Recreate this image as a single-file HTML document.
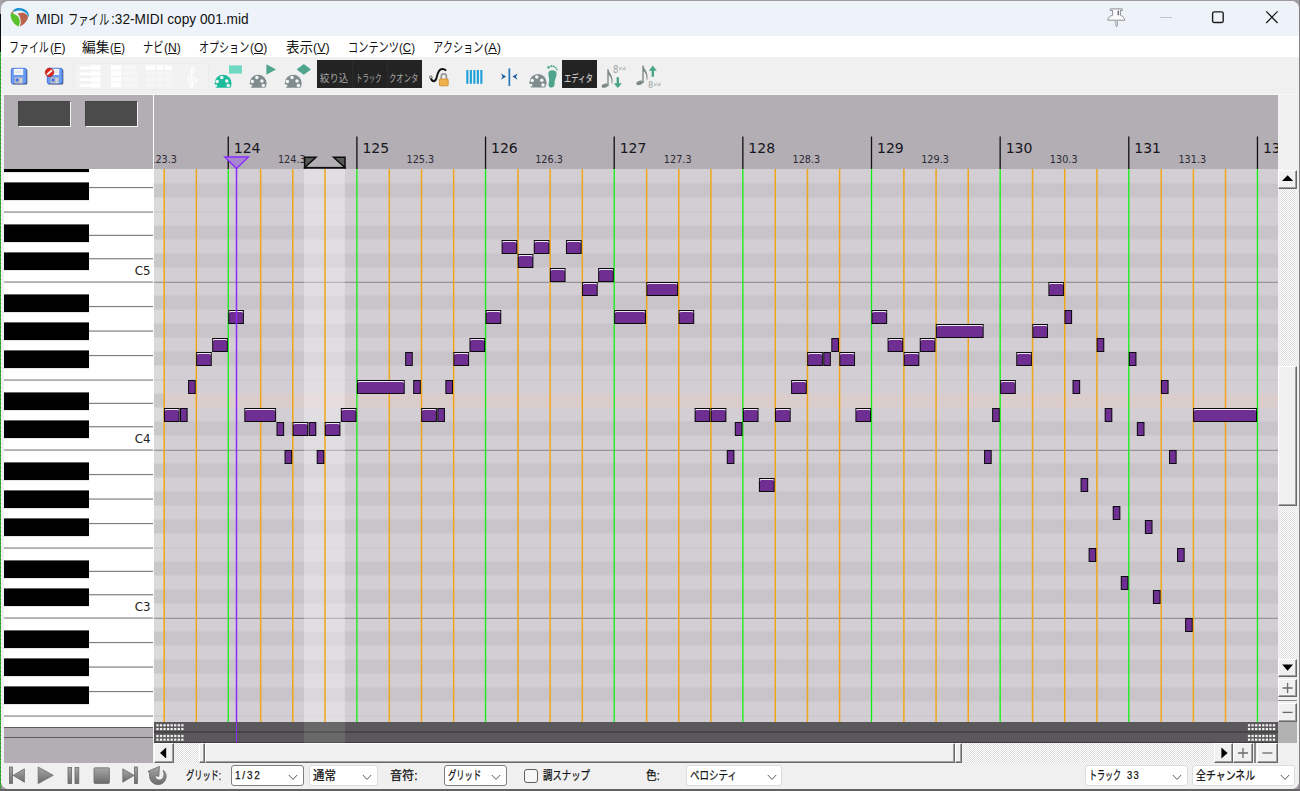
<!DOCTYPE html>
<html lang="ja">
<head>
<meta charset="utf-8">
<title>MIDI ファイル:32-MIDI copy 001.mid</title>
<style>
html,body{margin:0;padding:0}
body{width:1300px;height:791px;position:relative;overflow:hidden;background:#a29ea2;
 font-family:"Liberation Sans","Noto Sans CJK JP",sans-serif;color:#000}
.abs{position:absolute}
#edgeL0{left:0;top:0;width:1px;height:14px;background:#aaa6aa}
#edgeL1{left:0;top:14px;width:1px;height:38px;background:#0c0c0c}
#edgeL2{left:0;top:52px;width:1px;height:739px;background:repeating-linear-gradient(180deg,#2fb52f 0 3px,#4f6b4f 3px 4px)}
#edgeT{left:0;top:0;width:1300px;height:1px;background:#9d999d}
#edgeR{left:1299px;top:0;width:1px;height:791px;background:#868286}
#edgeB{left:0;top:789px;width:1300px;height:2px;background:#636163}
#win{left:1px;top:1px;width:1297.6px;height:788.2px;border-radius:8px;overflow:hidden;background:#f0f0f0}
#pg{left:-1px;top:-1px;width:1300px;height:791px}
#title{left:0;top:0;width:1300px;height:36px;background:#eef3f9}
.tt{left:35.5px;top:9.6px;font-size:14.2px;line-height:18px;white-space:nowrap;color:#111;transform-origin:0 50%}
#menu{left:0;top:36px;width:1300px;height:21px;background:#fff}
.mi{position:absolute;top:38.5px;font-size:13.5px;line-height:18px;white-space:nowrap;color:#111;transform-origin:0 50%}
.mi u{text-decoration:underline;text-underline-offset:1px}
#tb{left:0;top:57px;width:1300px;height:38px;background:#f0f0f0}
#tbline{left:0;top:94px;width:1300px;height:1px;background:#f7f7f7}
.dk{position:absolute;top:60px;height:28px;background:#232323;overflow:hidden}
.dkt{position:absolute;top:72px;font-size:10.5px;line-height:12px;color:#a6a6a6;white-space:nowrap;transform-origin:0 50%}
#hdr{left:4px;top:95px;width:1274px;height:74px;background:#b3aeb3}
.sunk{position:absolute;top:101.4px;height:23.6px;background:#4b4b4b;border-right:1px solid #f4f4f4;border-bottom:1px solid #f4f4f4;border-top:1px solid #444;border-left:1px solid #444;box-sizing:content-box}
#vsepl{left:153px;top:95px;width:1px;height:632px;background:#fbfbfb}
#pianobot{left:4px;top:727px;width:149px;height:36px;background:#b3aeb3}
#ccbars{left:154px;top:722px;width:1124px;height:21px;background:#5a585a}
#ccsep{left:154px;top:731px;width:1124px;height:2px;background:#464446}
#ccbot{left:154px;top:742px;width:1124px;height:1px;background:#3e3c3e}
#ccsel{left:304px;top:722px;width:40.9px;height:21px;background:rgba(255,255,255,.1)}
.dots{position:absolute;width:28px;height:7px;background:
 linear-gradient(90deg,#f2f2f2 0 2.2px,transparent 2.2px 3.5px) 0 0/3.5px 2.2px repeat-x,
 linear-gradient(90deg,#f2f2f2 0 2.2px,transparent 2.2px 3.5px) 0 3.9px/3.5px 2.2px repeat-x}
.chk{background:repeating-conic-gradient(#ffffff 0% 25%,#dedede 0% 50%) 0 0/2px 2px}
.btn3d{position:absolute;background:#f0f0f0;box-sizing:border-box;border-top:1px solid #fff;border-left:1px solid #fff;border-right:1px solid #696969;border-bottom:1px solid #696969;box-shadow:inset -1px -1px 0 #a0a0a0}
#botbar{left:0;top:763px;width:1300px;height:28px;background:#f0f0f0}
.dd{position:absolute;top:765px;height:21px;box-sizing:border-box;background:#fff;border:1px solid #dcdcdc;border-radius:3px;overflow:hidden}
.dd.dkb{border-color:#7f7f7f}
.dd .t{position:absolute;left:5px;top:1.6px;font-size:12px;line-height:16px;white-space:nowrap;color:#111;-webkit-text-stroke:.25px #111;transform-origin:0 50%}
.dd svg{position:absolute;right:4.5px;top:8.4px}
.lbl{position:absolute;top:767.8px;font-size:12px;line-height:16px;white-space:nowrap;color:#111;-webkit-text-stroke:.25px #111;transform-origin:0 50%}
svg{display:block}
svg text{font-family:"DejaVu Sans","Liberation Sans",sans-serif}
#t1{transform:scaleX(0.9214);left:35.7px}
#t2{transform:scaleX(0.7258);left:68.4px}
#t3{transform:scaleX(0.9640);left:110.6px}
#m1k{transform:scaleX(0.7370);left:9.2px}
#m1p{transform:scaleX(0.8928);left:49.6px}
#m2k{transform:scaleX(1.0148);left:82.2px}
#m2p{transform:scaleX(0.8326);left:110.2px}
#m3k{transform:scaleX(0.7593);left:143.1px}
#m3p{transform:scaleX(0.8960);left:164.2px}
#m4k{transform:scaleX(0.7437);left:199.4px}
#m4p{transform:scaleX(0.8865);left:250.2px}
#m5k{transform:scaleX(1.0037);left:285.5px}
#m5p{transform:scaleX(0.9214);left:313.2px}
#m6k{transform:scaleX(0.7556);left:347.5px}
#m6p{transform:scaleX(0.8533);left:399.2px}
#m7k{transform:scaleX(0.7557);left:432.5px}
#m7p{transform:scaleX(0.9436);left:483.6px}
#k1{transform:scaleX(0.8952);left:319.8px}
#k2{transform:scaleX(0.6095);left:356.4px}
#k3{transform:scaleX(0.7000);left:389.2px}
#k4{transform:scaleX(0.6979);left:564.3px}
#l1{transform:scaleX(0.6836);left:186.4px}
#d1{transform:scaleX(0.9075);left:3.0px}
#d2{transform:scaleX(0.9535);left:2.8px}
#l2{transform:scaleX(1.0094);left:389.9px}
#d3{transform:scaleX(0.6914);left:3.0px}
#l3{transform:scaleX(0.7831);left:543.0px}
#l4{transform:scaleX(0.8864);left:645.4px}
#d4{transform:scaleX(0.7945);left:2.7px}
#d5{transform:scaleX(0.6685);left:3.0px}
#d7{transform:scaleX(0.8551);left:41.9px}
#d6{transform:scaleX(0.8263);left:3.5px}
</style>
</head>
<body>
<div class="abs" id="win"><div class="abs" id="pg">

<!-- title bar -->
<div class="abs" id="title"></div>
<svg class="abs" style="left:10px;top:7px" width="20" height="21" viewBox="0 0 20 21">
 <path d="M3.6 2.9 C6 .6 10 .4 13.4 1.8 C17 3.4 19.4 6.4 18.8 9.7 L17.6 9.2 C17.6 7 16 5.4 14.3 4.9 C11.4 3.2 7.6 3.2 4.7 4.4 Z" fill="#1e8fd2"/>
 <path d="M.6 6.7 C.4 10 1.4 13 3.4 15.4 C5 17.4 7 18.8 8.7 19.5 C9.6 17 9.9 15 9.7 13.2 C9.3 10.4 7 8 4.7 7.2 C3.2 6.6 1.8 6.4 .6 6.7 Z" fill="#5bc12b"/>
 <path d="M7.7 6.4 C10 5.6 12.4 5.6 14.3 6.1 C16 6.7 17.4 8.4 18.1 10.2 C17.6 12.4 16.6 13.8 16.3 14.2 C14.6 16.6 12.4 18.4 9.7 19.5 C10.8 17 10.9 15.4 10.7 14.2 C10.6 11.4 9.8 8.6 7.7 6.4 Z" fill="#b9634f"/>
 <path d="M2.2 4.4 L3.6 6.6 L.8 6.5 Z" fill="#8a6a18"/>
 <path d="M2.2 4.4 L3.6 2.9 L4.4 4.4 Z" fill="#4a6a5a"/>
</svg>
<div class="abs tt" id="t1">MIDI</div><div class="abs tt" id="t2">ファイル</div><div class="abs tt" id="t3">:32-MIDI copy 001.mid</div>
<!-- caption buttons -->
<svg class="abs" style="left:1106px;top:8px" width="20" height="20" viewBox="0 0 20 20">
 <path d="M4.2 .9 H16.3 V2.5 H14.4 V7.3 C16.8 8 18.4 9.6 18.7 12.2 H1.8 C2.1 9.6 3.7 8 6.6 7.3 V2.5 H4.2 Z" fill="#fbfbfb" stroke="#8e9094" stroke-width="1"/>
 <path d="M9.8 12.4 V17 L10.6 18.8 L11.4 17 V12.4" fill="#fbfbfb" stroke="#8e9094" stroke-width=".9"/>
 <path d="M12.2 2.8 V7.2" stroke="#444" stroke-width="1.1"/>
</svg>
<div class="abs" style="left:1160px;top:17px;width:12px;height:1px;background:#c3c7cb"></div>
<svg class="abs" style="left:1211px;top:10px" width="14" height="14" viewBox="0 0 14 14"><rect x="1.6" y="1.9" width="10.6" height="10.6" rx="1.6" fill="none" stroke="#1c1c1c" stroke-width="1.4"/></svg>
<svg class="abs" style="left:1265px;top:10px" width="14" height="14" viewBox="0 0 14 14"><path d="M1.2 1.4 L12.6 13 M12.6 1.4 L1.2 13" stroke="#1c1c1c" stroke-width="1.3" fill="none"/></svg>

<!-- menu -->
<div class="abs" id="menu"></div>
<div class="mi" id="m1k">ファイル</div><div class="mi" id="m1p">(<u>F</u>)</div>
<div class="mi" id="m2k">編集</div><div class="mi" id="m2p">(<u>E</u>)</div>
<div class="mi" id="m3k">ナビ</div><div class="mi" id="m3p">(<u>N</u>)</div>
<div class="mi" id="m4k">オプション</div><div class="mi" id="m4p">(<u>O</u>)</div>
<div class="mi" id="m5k">表示</div><div class="mi" id="m5p">(<u>V</u>)</div>
<div class="mi" id="m6k">コンテンツ</div><div class="mi" id="m6p">(<u>C</u>)</div>
<div class="mi" id="m7k">アクション</div><div class="mi" id="m7p">(<u>A</u>)</div>

<!-- toolbar -->
<div class="abs" id="tb"></div>
<div class="abs" id="tbline"></div>
<svg class="abs" style="left:0;top:57px" width="700" height="38" viewBox="0 57 700 38">
 <!-- save -->
 <g>
  <rect x="11.9" y="69" width="15.4" height="15.6" rx="1.6" fill="#1a1a22" opacity=".75"/>
  <rect x="11.3" y="68.3" width="15" height="15.4" rx="1.6" fill="#6a9bf6" stroke="#3f6fe0" stroke-width=".9"/>
  <rect x="13.8" y="68.8" width="9.4" height="6.2" fill="#f2f4f8"/>
  <rect x="14.9" y="71.2" width="7.2" height="1.6" fill="#dfe1e6"/>
  <rect x="14.5" y="77.3" width="8.4" height="6.2" fill="#b4b8c0"/>
  <circle cx="17.200000000000003" cy="79.9" r="1.5" fill="#3a6cf0"/>
  <rect x="19.6" y="78.3" width="2.4" height="4.6" fill="#d0d3d8"/>
 </g>
 <g>
  <rect x="47.9" y="69" width="15.4" height="15.6" rx="1.6" fill="#1a1a22" opacity=".75"/>
  <rect x="47.3" y="68.3" width="15" height="15.4" rx="1.6" fill="#6a9bf6" stroke="#3f6fe0" stroke-width=".9"/>
  <rect x="49.8" y="68.8" width="9.4" height="6.2" fill="#f2f4f8"/>
  <rect x="50.9" y="71.2" width="7.2" height="1.6" fill="#dfe1e6"/>
  <rect x="50.5" y="77.3" width="8.4" height="6.2" fill="#b4b8c0"/>
  <circle cx="53.199999999999996" cy="79.9" r="1.5" fill="#3a6cf0"/>
  <rect x="55.599999999999994" y="78.3" width="2.4" height="4.6" fill="#d0d3d8"/>
  <circle cx="49.5" cy="72.4" r="4.2" fill="#e0281e" stroke="#b01810" stroke-width=".7"/>
  <path d="M47 74.6 L52 70.2" stroke="#fff" stroke-width="1.9"/>
 </g>
 <!-- disabled view group -->
 <rect x="73.5" y="63.5" width="135" height="26" rx="4" fill="#f2f2f2" stroke="#ececec" stroke-width="1"/>
 <g fill="#fff">
  <rect x="79.5" y="66.6" width="12" height="2.6"/><rect x="91" y="65.4" width="9.4" height="4.6"/><rect x="79.5" y="72.5" width="12" height="2.6"/><rect x="91" y="71.3" width="9.4" height="4.6"/><rect x="79.5" y="78.4" width="12" height="2.6"/><rect x="91" y="77.2" width="9.4" height="4.6"/><rect x="79.5" y="84.3" width="12" height="2.6"/><rect x="91" y="83.1" width="9.4" height="4.6"/>
  <rect x="111" y="65.3" width="10.5" height="4.6"/><rect x="111" y="71.1" width="10.5" height="4.6"/><rect x="111" y="76.9" width="10.5" height="4.6"/><rect x="111" y="82.7" width="10.5" height="4.6"/>
  <rect x="146" y="65.5" width="9" height="4.4"/><rect x="156.5" y="65.5" width="7" height="4.4"/><rect x="165" y="65.5" width="7" height="4.4"/>
 </g>
 <g fill="#f6f6f6">
  <rect x="123" y="65.3" width="14" height="4.6"/><rect x="123" y="71.1" width="14" height="4.6"/><rect x="123" y="76.9" width="14" height="4.6"/><rect x="123" y="82.7" width="14" height="4.6"/>
  <rect x="146" y="71.3" width="9" height="4.4"/><rect x="156.5" y="71.3" width="7" height="4.4"/><rect x="165" y="71.3" width="7" height="4.4"/>
  <rect x="146" y="77.1" width="9" height="4.4"/><rect x="156.5" y="77.1" width="7" height="4.4"/><rect x="165" y="77.1" width="7" height="4.4"/>
  <rect x="146" y="82.9" width="9" height="4.4"/><rect x="156.5" y="82.9" width="7" height="4.4"/><rect x="165" y="82.9" width="7" height="4.4"/>
 </g>
 <!-- treble clef (disabled) -->
 <path d="M192.6 87 C189.5 88 189.4 84.6 191.6 84.4 M192.6 87 L191.4 70 C191.2 66.6 194.4 65.4 194.2 69.4 C194 73 187.4 75.6 188 80.4 C188.6 84.6 196.4 84.4 196 80 C195.6 76.6 190.6 77.2 191.2 80.6" fill="none" stroke="#fff" stroke-width="1.1"/>
 <!-- midi icons -->
 <clipPath id="cpA"><rect x="200" y="60" width="120" height="27.8"/></clipPath>
 <g clip-path="url(#cpA)">
  <circle cx="223.1" cy="83.2" r="8.4" fill="#1abc9c"/>
  <circle cx="258.2" cy="83.2" r="8.4" fill="#7f8c8d"/>
  <circle cx="293.3" cy="83.2" r="8.4" fill="#7f8c8d"/>
 </g>
 <g fill="#f4f4f4">
  <circle cx="221.8" cy="77.6" r="1.75"/><circle cx="217.2" cy="81.4" r="1.75"/><circle cx="226.8" cy="81" r="1.75"/><circle cx="228.2" cy="85.6" r="1.75"/><rect x="214.4" y="84.6" width="2.6" height="2.2"/>
  <circle cx="256.9" cy="77.6" r="1.75"/><circle cx="252.3" cy="81.4" r="1.75"/><circle cx="261.9" cy="81" r="1.75"/><circle cx="263.3" cy="85.6" r="1.75"/><rect x="249.5" y="84.6" width="2.6" height="2.2"/>
  <circle cx="292" cy="77.6" r="1.75"/><circle cx="287.4" cy="81.4" r="1.75"/><circle cx="297" cy="81" r="1.75"/><circle cx="298.4" cy="85.6" r="1.75"/><rect x="284.6" y="84.6" width="2.6" height="2.2"/>
 </g>
 <rect x="229" y="65.4" width="13" height="8.2" fill="#6fd9c4"/>
 <path d="M266.4 64.3 L276 69.5 L266.4 74.7 Z" fill="#4fa58b"/>
 <path d="M296.6 69.4 L303.8 64 L311 69.4 L303.8 74.8 Z" fill="#4fa58b"/>
 <!-- lock icon -->
 <path d="M430.6 77.2 C432 82.8 435.6 82.4 436.8 77 C438.2 70.4 441.2 66.6 446.2 70.6" fill="none" stroke="#111" stroke-width="1.9"/>
 <circle cx="430.8" cy="77.2" r="1.3" fill="#fff" stroke="#111" stroke-width=".6"/>
 <path d="M441.2 79.4 V76.4 C441.2 73 446.4 73 446.4 76.4 V79.4" fill="none" stroke="#9a9a9a" stroke-width="1.7"/>
 <rect x="439.4" y="79" width="8.8" height="6.8" rx=".8" fill="#f0b04a" stroke="#c98a2a" stroke-width=".8"/>
 <!-- blue bars -->
 <g fill="#1b9fd8">
  <rect x="466.3" y="70" width="2.1" height="13.8"/><rect x="469.8" y="70" width="2.1" height="13.8"/><rect x="473.3" y="70" width="2.1" height="13.8"/><rect x="476.8" y="70" width="2.1" height="13.8"/><rect x="480.3" y="70" width="2.1" height="13.8"/>
 </g>
 <!-- >|< -->
 <rect x="508.5" y="68.4" width="1.7" height="17.6" fill="#1f78b8"/>
 <path d="M501 73.6 L506.2 76.6 L501 79.8 L502.6 76.7 Z" fill="#1f5fa0"/>
 <path d="M517.6 73.6 L512.4 76.6 L517.6 79.8 L516 76.7 Z" fill="#1f5fa0"/>
 <!-- midi + foot -->
 <clipPath id="cpB"><rect x="520" y="60" width="40" height="27.6"/></clipPath>
 <g clip-path="url(#cpB)"><circle cx="538" cy="82.6" r="8.6" fill="#7f8c8d"/></g>
 <g fill="#f4f4f4"><circle cx="536.8" cy="77" r="1.75"/><circle cx="532.2" cy="80.6" r="1.75"/><circle cx="541.8" cy="80.2" r="1.75"/><circle cx="543" cy="85" r="1.75"/><rect x="529.6" y="84" width="2.6" height="2.2"/></g>
 <path d="M549 71.5 C551 69.4 556.6 70 556.6 73.6 C556.6 77.6 554.4 79.4 554.6 83 C554.8 86.6 553 87.8 551 87.6 C548.4 87.4 548.2 84.6 549 81.4 C549.8 78 547.2 74.4 549 71.5 Z" fill="#4fa58b"/>
 <g fill="#4fa58b"><circle cx="548.6" cy="67.4" r="1.3"/><circle cx="551.4" cy="66.2" r="1.1"/><circle cx="553.8" cy="66.6" r="1"/><circle cx="555.8" cy="67.8" r=".9"/><circle cx="557" cy="69.6" r=".8"/></g>
 <!-- note icons -->
 <clipPath id="cpN"><rect x="598" y="60" width="70" height="27.8"/></clipPath>
 <g clip-path="url(#cpN)">
 <g fill="#7e8a87">
  <ellipse cx="604.9" cy="85.8" rx="3.4" ry="2.1" transform="rotate(-20 604.9 85.8)"/>
  <path d="M607.3 86 V69.2 H608.5 C608.9 73 613.6 75 612.4 83.6 L611.5 83.4 C612 78 609.8 76 608.7 75 V86 Z"/>
  <ellipse cx="639.6" cy="82.9" rx="3.4" ry="2.1" transform="rotate(-20 639.6 82.9)"/>
  <path d="M642.3 83 V65.4 H643.5 C643.9 69.2 648.6 71.2 647.4 79.8 L646.5 79.6 C647 74.2 644.8 72.2 643.7 71.2 V83 Z"/>
 </g>
 <path d="M616.6 77.2 H619 V83.2 H621.8 L617.8 88.2 L613.8 83.2 H616.6 Z" fill="#4aa68a"/>
 <path d="M651.6 76.8 H654 V70.8 H656.8 L652.8 65.6 L648.8 70.8 H651.6 Z" fill="#4aa68a"/>
 <text x="613" y="73.2" font-size="10" fill="#9aa4a1" textLength="5.4" lengthAdjust="spacingAndGlyphs">8</text>
 <text x="618.4" y="70.4" font-size="6" fill="#9aa4a1" font-style="italic" textLength="7.4" lengthAdjust="spacingAndGlyphs">va</text>
 <text x="648" y="87.6" font-size="9" fill="#9aa4a1" textLength="5.2" lengthAdjust="spacingAndGlyphs">8</text>
 <text x="653.4" y="85.6" font-size="6" fill="#9aa4a1" font-style="italic" textLength="7.4" lengthAdjust="spacingAndGlyphs">va</text>
 </g>
</svg>
<div class="dk" style="left:316.5px;width:35px"></div><div class="dkt" id="k1">絞り込</div>
<div class="dk" style="left:351.5px;width:35px;border-left:1px solid #2b2b2b;box-sizing:border-box"></div><div class="dkt" id="k2">トラック</div>
<div class="dk" style="left:386.5px;width:35px;border-left:1px solid #2b2b2b;box-sizing:border-box"></div><div class="dkt" id="k3">クオンタ</div>
<div class="dk" style="left:562px;width:35px"></div><div class="dkt" id="k4" style="color:#e4e4e4">エディタ</div>

<!-- header / ruler -->
<div class="abs" id="hdr"></div>
<div class="sunk" style="left:18.3px;width:51px"></div>
<div class="sunk" style="left:84.6px;width:51px"></div>

<!-- main editor svg -->
<svg class="abs" style="left:0;top:95px" width="1300" height="648" viewBox="0 95 1300 648">
<rect x="4" y="169" width="149" height="558" fill="#ffffff"/>
<rect x="4" y="281.45" width="149" height="1.2" fill="#858585"/>
<rect x="4" y="211.45" width="149" height="1.2" fill="#858585"/>
<rect x="88" y="258.12" width="65" height="1.2" fill="#808080"/>
<rect x="88" y="234.78" width="65" height="1.2" fill="#808080"/>
<rect x="88" y="186.95" width="65" height="1.2" fill="#808080"/>
<rect x="4" y="449.45" width="149" height="1.2" fill="#858585"/>
<rect x="4" y="379.45" width="149" height="1.2" fill="#858585"/>
<rect x="88" y="426.12" width="65" height="1.2" fill="#808080"/>
<rect x="88" y="402.78" width="65" height="1.2" fill="#808080"/>
<rect x="88" y="354.95" width="65" height="1.2" fill="#808080"/>
<rect x="88" y="330.45" width="65" height="1.2" fill="#808080"/>
<rect x="88" y="305.95" width="65" height="1.2" fill="#808080"/>
<rect x="4" y="617.45" width="149" height="1.2" fill="#858585"/>
<rect x="4" y="547.45" width="149" height="1.2" fill="#858585"/>
<rect x="88" y="594.12" width="65" height="1.2" fill="#808080"/>
<rect x="88" y="570.78" width="65" height="1.2" fill="#808080"/>
<rect x="88" y="522.95" width="65" height="1.2" fill="#808080"/>
<rect x="88" y="498.45" width="65" height="1.2" fill="#808080"/>
<rect x="88" y="473.95" width="65" height="1.2" fill="#808080"/>
<rect x="4" y="715.45" width="149" height="1.2" fill="#858585"/>
<rect x="88" y="690.95" width="65" height="1.2" fill="#808080"/>
<rect x="88" y="666.45" width="65" height="1.2" fill="#808080"/>
<rect x="88" y="641.95" width="65" height="1.2" fill="#808080"/>
<rect x="4" y="169.00" width="85" height="3.10" fill="#000"/>
<rect x="4" y="182.40" width="85" height="17.70" fill="#000"/>
<rect x="4" y="224.40" width="85" height="17.70" fill="#000"/>
<rect x="4" y="252.40" width="85" height="17.70" fill="#000"/>
<rect x="4" y="294.40" width="85" height="17.70" fill="#000"/>
<rect x="4" y="322.40" width="85" height="17.70" fill="#000"/>
<rect x="4" y="350.40" width="85" height="17.70" fill="#000"/>
<rect x="4" y="392.40" width="85" height="17.70" fill="#000"/>
<rect x="4" y="420.40" width="85" height="17.70" fill="#000"/>
<rect x="4" y="462.40" width="85" height="17.70" fill="#000"/>
<rect x="4" y="490.40" width="85" height="17.70" fill="#000"/>
<rect x="4" y="518.40" width="85" height="17.70" fill="#000"/>
<rect x="4" y="560.40" width="85" height="17.70" fill="#000"/>
<rect x="4" y="588.40" width="85" height="17.70" fill="#000"/>
<rect x="4" y="630.40" width="85" height="17.70" fill="#000"/>
<rect x="4" y="658.40" width="85" height="17.70" fill="#000"/>
<rect x="4" y="686.40" width="85" height="17.70" fill="#000"/>
<text x="150.6" y="275.10" font-size="11.8" text-anchor="end" fill="#222" font-family="Liberation Sans, sans-serif">C5</text>
<text x="150.6" y="443.10" font-size="11.8" text-anchor="end" fill="#222" font-family="Liberation Sans, sans-serif">C4</text>
<text x="150.6" y="611.10" font-size="11.8" text-anchor="end" fill="#222" font-family="Liberation Sans, sans-serif">C3</text>
<clipPath id="cpG"><rect x="154" y="95" width="1124" height="648"/></clipPath>
<g clip-path="url(#cpG)">
<rect x="154" y="169" width="9.93" height="553" fill="#dadada"/>
<rect x="163.93" y="169" width="1114.08" height="553" fill="#d2ced3"/>
<rect x="154" y="183.50" width="9.93" height="14.00" fill="#c9c9c9"/>
<rect x="163.93" y="183.50" width="1114.08" height="14.00" fill="#c8c4c9"/>
<rect x="154" y="211.40" width="1124" height="1" fill="#c9c5ca"/>
<rect x="154" y="225.50" width="9.93" height="14.00" fill="#c9c9c9"/>
<rect x="163.93" y="225.50" width="1114.08" height="14.00" fill="#c8c4c9"/>
<rect x="154" y="253.50" width="9.93" height="14.00" fill="#c9c9c9"/>
<rect x="163.93" y="253.50" width="1114.08" height="14.00" fill="#c8c4c9"/>
<rect x="154" y="295.50" width="9.93" height="14.00" fill="#c9c9c9"/>
<rect x="163.93" y="295.50" width="1114.08" height="14.00" fill="#c8c4c9"/>
<rect x="154" y="323.50" width="9.93" height="14.00" fill="#c9c9c9"/>
<rect x="163.93" y="323.50" width="1114.08" height="14.00" fill="#c8c4c9"/>
<rect x="154" y="351.50" width="9.93" height="14.00" fill="#c9c9c9"/>
<rect x="163.93" y="351.50" width="1114.08" height="14.00" fill="#c8c4c9"/>
<rect x="154" y="379.40" width="1124" height="1" fill="#c9c5ca"/>
<rect x="154" y="393.50" width="9.93" height="14.00" fill="#c9c9c9"/>
<rect x="163.93" y="393.50" width="1114.08" height="14.00" fill="#dccdcd"/>
<rect x="154" y="421.50" width="9.93" height="14.00" fill="#c9c9c9"/>
<rect x="163.93" y="421.50" width="1114.08" height="14.00" fill="#c8c4c9"/>
<rect x="154" y="463.50" width="9.93" height="14.00" fill="#c9c9c9"/>
<rect x="163.93" y="463.50" width="1114.08" height="14.00" fill="#c8c4c9"/>
<rect x="154" y="491.50" width="9.93" height="14.00" fill="#c9c9c9"/>
<rect x="163.93" y="491.50" width="1114.08" height="14.00" fill="#c8c4c9"/>
<rect x="154" y="519.50" width="9.93" height="14.00" fill="#c9c9c9"/>
<rect x="163.93" y="519.50" width="1114.08" height="14.00" fill="#c8c4c9"/>
<rect x="154" y="547.40" width="1124" height="1" fill="#c9c5ca"/>
<rect x="154" y="561.50" width="9.93" height="14.00" fill="#c9c9c9"/>
<rect x="163.93" y="561.50" width="1114.08" height="14.00" fill="#c8c4c9"/>
<rect x="154" y="589.50" width="9.93" height="14.00" fill="#c9c9c9"/>
<rect x="163.93" y="589.50" width="1114.08" height="14.00" fill="#c8c4c9"/>
<rect x="154" y="631.50" width="9.93" height="14.00" fill="#c9c9c9"/>
<rect x="163.93" y="631.50" width="1114.08" height="14.00" fill="#c8c4c9"/>
<rect x="154" y="659.50" width="9.93" height="14.00" fill="#c9c9c9"/>
<rect x="163.93" y="659.50" width="1114.08" height="14.00" fill="#c8c4c9"/>
<rect x="154" y="687.50" width="9.93" height="14.00" fill="#c9c9c9"/>
<rect x="163.93" y="687.50" width="1114.08" height="14.00" fill="#c8c4c9"/>
<rect x="154" y="715.40" width="1124" height="1" fill="#c9c5ca"/>
<rect x="154" y="281.75" width="1124" height="1.1" fill="#8f8b8f"/>
<rect x="154" y="449.75" width="1124" height="1.1" fill="#8f8b8f"/>
<rect x="154" y="617.75" width="1124" height="1.1" fill="#8f8b8f"/>
<rect x="304.0" y="169" width="40.90" height="553" fill="#ffffff" fill-opacity="0.33"/>
<rect x="163.43" y="169" width="1.5" height="553" fill="#f0a61a"/>
<rect x="195.59" y="169" width="1.5" height="553" fill="#f0a61a"/>
<rect x="227.60" y="169" width="1.3" height="553" fill="#12f012"/>
<rect x="259.91" y="169" width="1.5" height="553" fill="#f0a61a"/>
<rect x="292.07" y="169" width="1.5" height="553" fill="#f0a61a"/>
<rect x="324.24" y="169" width="1.5" height="553" fill="#f0a61a"/>
<rect x="356.25" y="169" width="1.3" height="553" fill="#12f012"/>
<rect x="388.56" y="169" width="1.5" height="553" fill="#f0a61a"/>
<rect x="420.73" y="169" width="1.5" height="553" fill="#f0a61a"/>
<rect x="452.89" y="169" width="1.5" height="553" fill="#f0a61a"/>
<rect x="484.90" y="169" width="1.3" height="553" fill="#12f012"/>
<rect x="517.21" y="169" width="1.5" height="553" fill="#f0a61a"/>
<rect x="549.38" y="169" width="1.5" height="553" fill="#f0a61a"/>
<rect x="581.54" y="169" width="1.5" height="553" fill="#f0a61a"/>
<rect x="613.55" y="169" width="1.3" height="553" fill="#12f012"/>
<rect x="645.86" y="169" width="1.5" height="553" fill="#f0a61a"/>
<rect x="678.03" y="169" width="1.5" height="553" fill="#f0a61a"/>
<rect x="710.19" y="169" width="1.5" height="553" fill="#f0a61a"/>
<rect x="742.20" y="169" width="1.3" height="553" fill="#12f012"/>
<rect x="774.51" y="169" width="1.5" height="553" fill="#f0a61a"/>
<rect x="806.68" y="169" width="1.5" height="553" fill="#f0a61a"/>
<rect x="838.84" y="169" width="1.5" height="553" fill="#f0a61a"/>
<rect x="870.85" y="169" width="1.3" height="553" fill="#12f012"/>
<rect x="903.16" y="169" width="1.5" height="553" fill="#f0a61a"/>
<rect x="935.33" y="169" width="1.5" height="553" fill="#f0a61a"/>
<rect x="967.49" y="169" width="1.5" height="553" fill="#f0a61a"/>
<rect x="999.50" y="169" width="1.3" height="553" fill="#12f012"/>
<rect x="1031.81" y="169" width="1.5" height="553" fill="#f0a61a"/>
<rect x="1063.97" y="169" width="1.5" height="553" fill="#f0a61a"/>
<rect x="1096.14" y="169" width="1.5" height="553" fill="#f0a61a"/>
<rect x="1128.15" y="169" width="1.3" height="553" fill="#12f012"/>
<rect x="1160.46" y="169" width="1.5" height="553" fill="#f0a61a"/>
<rect x="1192.62" y="169" width="1.5" height="553" fill="#f0a61a"/>
<rect x="1224.79" y="169" width="1.5" height="553" fill="#f0a61a"/>
<rect x="1256.80" y="169" width="1.3" height="553" fill="#12f012"/>
<rect x="163.93" y="408.00" width="15.68" height="14" fill="#0a0a0a"/>
<rect x="164.93" y="409.00" width="13.68" height="12" fill="#6f2e92"/>
<path d="M165.23 410.60 L165.23 409.50 L178.31 409.50 L178.31 410.60" fill="none" stroke="#eee6f2" stroke-width="1"/>
<rect x="180.01" y="408.00" width="7.64" height="14" fill="#0a0a0a"/>
<rect x="181.01" y="409.00" width="5.64" height="12" fill="#6f2e92"/>
<rect x="188.05" y="380.00" width="7.64" height="14" fill="#0a0a0a"/>
<rect x="189.05" y="381.00" width="5.64" height="12" fill="#6f2e92"/>
<rect x="196.09" y="352.00" width="15.68" height="14" fill="#0a0a0a"/>
<rect x="197.09" y="353.00" width="13.68" height="12" fill="#6f2e92"/>
<path d="M197.39 354.60 L197.39 353.50 L210.47 353.50 L210.47 354.60" fill="none" stroke="#eee6f2" stroke-width="1"/>
<rect x="212.17" y="338.00" width="15.68" height="14" fill="#0a0a0a"/>
<rect x="213.17" y="339.00" width="13.68" height="12" fill="#6f2e92"/>
<path d="M213.47 340.60 L213.47 339.50 L226.55 339.50 L226.55 340.60" fill="none" stroke="#eee6f2" stroke-width="1"/>
<rect x="228.25" y="310.00" width="15.68" height="14" fill="#0a0a0a"/>
<rect x="229.25" y="311.00" width="13.68" height="12" fill="#6f2e92"/>
<path d="M229.55 312.60 L229.55 311.50 L242.63 311.50 L242.63 312.60" fill="none" stroke="#eee6f2" stroke-width="1"/>
<rect x="244.33" y="408.00" width="31.76" height="14" fill="#0a0a0a"/>
<rect x="245.33" y="409.00" width="29.76" height="12" fill="#6f2e92"/>
<path d="M245.63 410.60 L245.63 409.50 L274.79 409.50 L274.79 410.60" fill="none" stroke="#eee6f2" stroke-width="1"/>
<rect x="276.49" y="422.00" width="7.64" height="14" fill="#0a0a0a"/>
<rect x="277.49" y="423.00" width="5.64" height="12" fill="#6f2e92"/>
<rect x="284.53" y="450.00" width="7.64" height="14" fill="#0a0a0a"/>
<rect x="285.53" y="451.00" width="5.64" height="12" fill="#6f2e92"/>
<rect x="292.57" y="422.00" width="15.68" height="14" fill="#0a0a0a"/>
<rect x="293.57" y="423.00" width="13.68" height="12" fill="#6f2e92"/>
<path d="M293.88 424.60 L293.88 423.50 L306.96 423.50 L306.96 424.60" fill="none" stroke="#eee6f2" stroke-width="1"/>
<rect x="308.66" y="422.00" width="7.64" height="14" fill="#0a0a0a"/>
<rect x="309.66" y="423.00" width="5.64" height="12" fill="#6f2e92"/>
<rect x="316.70" y="450.00" width="7.64" height="14" fill="#0a0a0a"/>
<rect x="317.70" y="451.00" width="5.64" height="12" fill="#6f2e92"/>
<rect x="324.74" y="422.00" width="15.68" height="14" fill="#0a0a0a"/>
<rect x="325.74" y="423.00" width="13.68" height="12" fill="#6f2e92"/>
<path d="M326.04 424.60 L326.04 423.50 L339.12 423.50 L339.12 424.60" fill="none" stroke="#eee6f2" stroke-width="1"/>
<rect x="340.82" y="408.00" width="15.68" height="14" fill="#0a0a0a"/>
<rect x="341.82" y="409.00" width="13.68" height="12" fill="#6f2e92"/>
<path d="M342.12 410.60 L342.12 409.50 L355.20 409.50 L355.20 410.60" fill="none" stroke="#eee6f2" stroke-width="1"/>
<rect x="356.90" y="380.00" width="47.84" height="14" fill="#0a0a0a"/>
<rect x="357.90" y="381.00" width="45.84" height="12" fill="#6f2e92"/>
<path d="M358.20 382.60 L358.20 381.50 L403.44 381.50 L403.44 382.60" fill="none" stroke="#eee6f2" stroke-width="1"/>
<rect x="405.14" y="352.00" width="7.64" height="14" fill="#0a0a0a"/>
<rect x="406.14" y="353.00" width="5.64" height="12" fill="#6f2e92"/>
<rect x="413.18" y="380.00" width="7.64" height="14" fill="#0a0a0a"/>
<rect x="414.18" y="381.00" width="5.64" height="12" fill="#6f2e92"/>
<rect x="421.23" y="408.00" width="15.68" height="14" fill="#0a0a0a"/>
<rect x="422.23" y="409.00" width="13.68" height="12" fill="#6f2e92"/>
<path d="M422.53 410.60 L422.53 409.50 L435.61 409.50 L435.61 410.60" fill="none" stroke="#eee6f2" stroke-width="1"/>
<rect x="437.31" y="408.00" width="7.64" height="14" fill="#0a0a0a"/>
<rect x="438.31" y="409.00" width="5.64" height="12" fill="#6f2e92"/>
<rect x="445.35" y="380.00" width="7.64" height="14" fill="#0a0a0a"/>
<rect x="446.35" y="381.00" width="5.64" height="12" fill="#6f2e92"/>
<rect x="453.39" y="352.00" width="15.68" height="14" fill="#0a0a0a"/>
<rect x="454.39" y="353.00" width="13.68" height="12" fill="#6f2e92"/>
<path d="M454.69 354.60 L454.69 353.50 L467.77 353.50 L467.77 354.60" fill="none" stroke="#eee6f2" stroke-width="1"/>
<rect x="469.47" y="338.00" width="15.68" height="14" fill="#0a0a0a"/>
<rect x="470.47" y="339.00" width="13.68" height="12" fill="#6f2e92"/>
<path d="M470.77 340.60 L470.77 339.50 L483.85 339.50 L483.85 340.60" fill="none" stroke="#eee6f2" stroke-width="1"/>
<rect x="485.55" y="310.00" width="15.68" height="14" fill="#0a0a0a"/>
<rect x="486.55" y="311.00" width="13.68" height="12" fill="#6f2e92"/>
<path d="M486.85 312.60 L486.85 311.50 L499.93 311.50 L499.93 312.60" fill="none" stroke="#eee6f2" stroke-width="1"/>
<rect x="501.63" y="240.00" width="15.68" height="14" fill="#0a0a0a"/>
<rect x="502.63" y="241.00" width="13.68" height="12" fill="#6f2e92"/>
<path d="M502.93 242.60 L502.93 241.50 L516.01 241.50 L516.01 242.60" fill="none" stroke="#eee6f2" stroke-width="1"/>
<rect x="517.71" y="254.00" width="15.68" height="14" fill="#0a0a0a"/>
<rect x="518.71" y="255.00" width="13.68" height="12" fill="#6f2e92"/>
<path d="M519.01 256.60 L519.01 255.50 L532.09 255.50 L532.09 256.60" fill="none" stroke="#eee6f2" stroke-width="1"/>
<rect x="533.79" y="240.00" width="15.68" height="14" fill="#0a0a0a"/>
<rect x="534.79" y="241.00" width="13.68" height="12" fill="#6f2e92"/>
<path d="M535.09 242.60 L535.09 241.50 L548.18 241.50 L548.18 242.60" fill="none" stroke="#eee6f2" stroke-width="1"/>
<rect x="549.88" y="268.00" width="15.68" height="14" fill="#0a0a0a"/>
<rect x="550.88" y="269.00" width="13.68" height="12" fill="#6f2e92"/>
<path d="M551.17 270.60 L551.17 269.50 L564.26 269.50 L564.26 270.60" fill="none" stroke="#eee6f2" stroke-width="1"/>
<rect x="565.96" y="240.00" width="15.68" height="14" fill="#0a0a0a"/>
<rect x="566.96" y="241.00" width="13.68" height="12" fill="#6f2e92"/>
<path d="M567.26 242.60 L567.26 241.50 L580.34 241.50 L580.34 242.60" fill="none" stroke="#eee6f2" stroke-width="1"/>
<rect x="582.04" y="282.00" width="15.68" height="14" fill="#0a0a0a"/>
<rect x="583.04" y="283.00" width="13.68" height="12" fill="#6f2e92"/>
<path d="M583.34 284.60 L583.34 283.50 L596.42 283.50 L596.42 284.60" fill="none" stroke="#eee6f2" stroke-width="1"/>
<rect x="598.12" y="268.00" width="15.68" height="14" fill="#0a0a0a"/>
<rect x="599.12" y="269.00" width="13.68" height="12" fill="#6f2e92"/>
<path d="M599.42 270.60 L599.42 269.50 L612.50 269.50 L612.50 270.60" fill="none" stroke="#eee6f2" stroke-width="1"/>
<rect x="614.20" y="310.00" width="31.76" height="14" fill="#0a0a0a"/>
<rect x="615.20" y="311.00" width="29.76" height="12" fill="#6f2e92"/>
<path d="M615.50 312.60 L615.50 311.50 L644.66 311.50 L644.66 312.60" fill="none" stroke="#eee6f2" stroke-width="1"/>
<rect x="646.36" y="282.00" width="31.76" height="14" fill="#0a0a0a"/>
<rect x="647.36" y="283.00" width="29.76" height="12" fill="#6f2e92"/>
<path d="M647.66 284.60 L647.66 283.50 L676.83 283.50 L676.83 284.60" fill="none" stroke="#eee6f2" stroke-width="1"/>
<rect x="678.53" y="310.00" width="15.68" height="14" fill="#0a0a0a"/>
<rect x="679.53" y="311.00" width="13.68" height="12" fill="#6f2e92"/>
<path d="M679.83 312.60 L679.83 311.50 L692.91 311.50 L692.91 312.60" fill="none" stroke="#eee6f2" stroke-width="1"/>
<rect x="694.61" y="408.00" width="15.68" height="14" fill="#0a0a0a"/>
<rect x="695.61" y="409.00" width="13.68" height="12" fill="#6f2e92"/>
<path d="M695.91 410.60 L695.91 409.50 L708.99 409.50 L708.99 410.60" fill="none" stroke="#eee6f2" stroke-width="1"/>
<rect x="710.69" y="408.00" width="15.68" height="14" fill="#0a0a0a"/>
<rect x="711.69" y="409.00" width="13.68" height="12" fill="#6f2e92"/>
<path d="M711.99 410.60 L711.99 409.50 L725.07 409.50 L725.07 410.60" fill="none" stroke="#eee6f2" stroke-width="1"/>
<rect x="726.77" y="450.00" width="7.64" height="14" fill="#0a0a0a"/>
<rect x="727.77" y="451.00" width="5.64" height="12" fill="#6f2e92"/>
<rect x="734.81" y="422.00" width="7.64" height="14" fill="#0a0a0a"/>
<rect x="735.81" y="423.00" width="5.64" height="12" fill="#6f2e92"/>
<rect x="742.85" y="408.00" width="15.68" height="14" fill="#0a0a0a"/>
<rect x="743.85" y="409.00" width="13.68" height="12" fill="#6f2e92"/>
<path d="M744.15 410.60 L744.15 409.50 L757.23 409.50 L757.23 410.60" fill="none" stroke="#eee6f2" stroke-width="1"/>
<rect x="758.93" y="478.00" width="15.68" height="14" fill="#0a0a0a"/>
<rect x="759.93" y="479.00" width="13.68" height="12" fill="#6f2e92"/>
<path d="M760.23 480.60 L760.23 479.50 L773.31 479.50 L773.31 480.60" fill="none" stroke="#eee6f2" stroke-width="1"/>
<rect x="775.01" y="408.00" width="15.68" height="14" fill="#0a0a0a"/>
<rect x="776.01" y="409.00" width="13.68" height="12" fill="#6f2e92"/>
<path d="M776.31 410.60 L776.31 409.50 L789.39 409.50 L789.39 410.60" fill="none" stroke="#eee6f2" stroke-width="1"/>
<rect x="791.09" y="380.00" width="15.68" height="14" fill="#0a0a0a"/>
<rect x="792.09" y="381.00" width="13.68" height="12" fill="#6f2e92"/>
<path d="M792.39 382.60 L792.39 381.50 L805.48 381.50 L805.48 382.60" fill="none" stroke="#eee6f2" stroke-width="1"/>
<rect x="807.18" y="352.00" width="15.68" height="14" fill="#0a0a0a"/>
<rect x="808.18" y="353.00" width="13.68" height="12" fill="#6f2e92"/>
<path d="M808.48 354.60 L808.48 353.50 L821.56 353.50 L821.56 354.60" fill="none" stroke="#eee6f2" stroke-width="1"/>
<rect x="823.26" y="352.00" width="7.64" height="14" fill="#0a0a0a"/>
<rect x="824.26" y="353.00" width="5.64" height="12" fill="#6f2e92"/>
<rect x="831.30" y="338.00" width="7.64" height="14" fill="#0a0a0a"/>
<rect x="832.30" y="339.00" width="5.64" height="12" fill="#6f2e92"/>
<rect x="839.34" y="352.00" width="15.68" height="14" fill="#0a0a0a"/>
<rect x="840.34" y="353.00" width="13.68" height="12" fill="#6f2e92"/>
<path d="M840.64 354.60 L840.64 353.50 L853.72 353.50 L853.72 354.60" fill="none" stroke="#eee6f2" stroke-width="1"/>
<rect x="855.42" y="408.00" width="15.68" height="14" fill="#0a0a0a"/>
<rect x="856.42" y="409.00" width="13.68" height="12" fill="#6f2e92"/>
<path d="M856.72 410.60 L856.72 409.50 L869.80 409.50 L869.80 410.60" fill="none" stroke="#eee6f2" stroke-width="1"/>
<rect x="871.50" y="310.00" width="15.68" height="14" fill="#0a0a0a"/>
<rect x="872.50" y="311.00" width="13.68" height="12" fill="#6f2e92"/>
<path d="M872.80 312.60 L872.80 311.50 L885.88 311.50 L885.88 312.60" fill="none" stroke="#eee6f2" stroke-width="1"/>
<rect x="887.58" y="338.00" width="15.68" height="14" fill="#0a0a0a"/>
<rect x="888.58" y="339.00" width="13.68" height="12" fill="#6f2e92"/>
<path d="M888.88 340.60 L888.88 339.50 L901.96 339.50 L901.96 340.60" fill="none" stroke="#eee6f2" stroke-width="1"/>
<rect x="903.66" y="352.00" width="15.68" height="14" fill="#0a0a0a"/>
<rect x="904.66" y="353.00" width="13.68" height="12" fill="#6f2e92"/>
<path d="M904.96 354.60 L904.96 353.50 L918.04 353.50 L918.04 354.60" fill="none" stroke="#eee6f2" stroke-width="1"/>
<rect x="919.74" y="338.00" width="15.68" height="14" fill="#0a0a0a"/>
<rect x="920.74" y="339.00" width="13.68" height="12" fill="#6f2e92"/>
<path d="M921.04 340.60 L921.04 339.50 L934.13 339.50 L934.13 340.60" fill="none" stroke="#eee6f2" stroke-width="1"/>
<rect x="935.83" y="324.00" width="47.84" height="14" fill="#0a0a0a"/>
<rect x="936.83" y="325.00" width="45.84" height="12" fill="#6f2e92"/>
<path d="M937.12 326.60 L937.12 325.50 L982.37 325.50 L982.37 326.60" fill="none" stroke="#eee6f2" stroke-width="1"/>
<rect x="984.07" y="450.00" width="7.64" height="14" fill="#0a0a0a"/>
<rect x="985.07" y="451.00" width="5.64" height="12" fill="#6f2e92"/>
<rect x="992.11" y="408.00" width="7.64" height="14" fill="#0a0a0a"/>
<rect x="993.11" y="409.00" width="5.64" height="12" fill="#6f2e92"/>
<rect x="1000.15" y="380.00" width="15.68" height="14" fill="#0a0a0a"/>
<rect x="1001.15" y="381.00" width="13.68" height="12" fill="#6f2e92"/>
<path d="M1001.45 382.60 L1001.45 381.50 L1014.53 381.50 L1014.53 382.60" fill="none" stroke="#eee6f2" stroke-width="1"/>
<rect x="1016.23" y="352.00" width="15.68" height="14" fill="#0a0a0a"/>
<rect x="1017.23" y="353.00" width="13.68" height="12" fill="#6f2e92"/>
<path d="M1017.53 354.60 L1017.53 353.50 L1030.61 353.50 L1030.61 354.60" fill="none" stroke="#eee6f2" stroke-width="1"/>
<rect x="1032.31" y="324.00" width="15.68" height="14" fill="#0a0a0a"/>
<rect x="1033.31" y="325.00" width="13.68" height="12" fill="#6f2e92"/>
<path d="M1033.61 326.60 L1033.61 325.50 L1046.69 325.50 L1046.69 326.60" fill="none" stroke="#eee6f2" stroke-width="1"/>
<rect x="1048.39" y="282.00" width="15.68" height="14" fill="#0a0a0a"/>
<rect x="1049.39" y="283.00" width="13.68" height="12" fill="#6f2e92"/>
<path d="M1049.69 284.60 L1049.69 283.50 L1062.77 283.50 L1062.77 284.60" fill="none" stroke="#eee6f2" stroke-width="1"/>
<rect x="1064.47" y="310.00" width="7.64" height="14" fill="#0a0a0a"/>
<rect x="1065.47" y="311.00" width="5.64" height="12" fill="#6f2e92"/>
<rect x="1072.52" y="380.00" width="7.64" height="14" fill="#0a0a0a"/>
<rect x="1073.52" y="381.00" width="5.64" height="12" fill="#6f2e92"/>
<rect x="1080.56" y="478.00" width="7.64" height="14" fill="#0a0a0a"/>
<rect x="1081.56" y="479.00" width="5.64" height="12" fill="#6f2e92"/>
<rect x="1088.60" y="548.00" width="7.64" height="14" fill="#0a0a0a"/>
<rect x="1089.60" y="549.00" width="5.64" height="12" fill="#6f2e92"/>
<rect x="1096.64" y="338.00" width="7.64" height="14" fill="#0a0a0a"/>
<rect x="1097.64" y="339.00" width="5.64" height="12" fill="#6f2e92"/>
<rect x="1104.68" y="408.00" width="7.64" height="14" fill="#0a0a0a"/>
<rect x="1105.68" y="409.00" width="5.64" height="12" fill="#6f2e92"/>
<rect x="1112.72" y="506.00" width="7.64" height="14" fill="#0a0a0a"/>
<rect x="1113.72" y="507.00" width="5.64" height="12" fill="#6f2e92"/>
<rect x="1120.76" y="576.00" width="7.64" height="14" fill="#0a0a0a"/>
<rect x="1121.76" y="577.00" width="5.64" height="12" fill="#6f2e92"/>
<rect x="1128.80" y="352.00" width="7.64" height="14" fill="#0a0a0a"/>
<rect x="1129.80" y="353.00" width="5.64" height="12" fill="#6f2e92"/>
<rect x="1136.84" y="422.00" width="7.64" height="14" fill="#0a0a0a"/>
<rect x="1137.84" y="423.00" width="5.64" height="12" fill="#6f2e92"/>
<rect x="1144.88" y="520.00" width="7.64" height="14" fill="#0a0a0a"/>
<rect x="1145.88" y="521.00" width="5.64" height="12" fill="#6f2e92"/>
<rect x="1152.92" y="590.00" width="7.64" height="14" fill="#0a0a0a"/>
<rect x="1153.92" y="591.00" width="5.64" height="12" fill="#6f2e92"/>
<rect x="1160.96" y="380.00" width="7.64" height="14" fill="#0a0a0a"/>
<rect x="1161.96" y="381.00" width="5.64" height="12" fill="#6f2e92"/>
<rect x="1169.00" y="450.00" width="7.64" height="14" fill="#0a0a0a"/>
<rect x="1170.00" y="451.00" width="5.64" height="12" fill="#6f2e92"/>
<rect x="1177.04" y="548.00" width="7.64" height="14" fill="#0a0a0a"/>
<rect x="1178.04" y="549.00" width="5.64" height="12" fill="#6f2e92"/>
<rect x="1185.08" y="618.00" width="7.64" height="14" fill="#0a0a0a"/>
<rect x="1186.08" y="619.00" width="5.64" height="12" fill="#6f2e92"/>
<rect x="1193.12" y="408.00" width="63.92" height="14" fill="#0a0a0a"/>
<rect x="1194.12" y="409.00" width="61.92" height="12" fill="#6f2e92"/>
<path d="M1194.42 410.60 L1194.42 409.50 L1255.75 409.50 L1255.75 410.60" fill="none" stroke="#eee6f2" stroke-width="1"/>
<rect x="235.75" y="168" width="1.5" height="575" fill="#8a2bff"/>
<rect x="227.60" y="136.5" width="1.3" height="32.5" fill="#101010"/>
<text x="233.75" y="153" font-size="14" fill="#16161e">124</text>
<rect x="356.25" y="136.5" width="1.3" height="32.5" fill="#101010"/>
<text x="362.40" y="153" font-size="14" fill="#16161e">125</text>
<rect x="484.90" y="136.5" width="1.3" height="32.5" fill="#101010"/>
<text x="491.05" y="153" font-size="14" fill="#16161e">126</text>
<rect x="613.55" y="136.5" width="1.3" height="32.5" fill="#101010"/>
<text x="619.70" y="153" font-size="14" fill="#16161e">127</text>
<rect x="742.20" y="136.5" width="1.3" height="32.5" fill="#101010"/>
<text x="748.35" y="153" font-size="14" fill="#16161e">128</text>
<rect x="870.85" y="136.5" width="1.3" height="32.5" fill="#101010"/>
<text x="877.00" y="153" font-size="14" fill="#16161e">129</text>
<rect x="999.50" y="136.5" width="1.3" height="32.5" fill="#101010"/>
<text x="1005.65" y="153" font-size="14" fill="#16161e">130</text>
<rect x="1128.15" y="136.5" width="1.3" height="32.5" fill="#101010"/>
<text x="1134.30" y="153" font-size="14" fill="#16161e">131</text>
<rect x="1256.80" y="136.5" width="1.3" height="32.5" fill="#101010"/>
<text x="1262.95" y="153" font-size="14" fill="#16161e">132</text>
<text x="163.12" y="162.6" font-size="9.7" text-anchor="middle" fill="#2a2a36">123.3</text>
<text x="291.77" y="162.6" font-size="9.7" text-anchor="middle" fill="#2a2a36">124.3</text>
<text x="420.42" y="162.6" font-size="9.7" text-anchor="middle" fill="#2a2a36">125.3</text>
<text x="549.08" y="162.6" font-size="9.7" text-anchor="middle" fill="#2a2a36">126.3</text>
<text x="677.73" y="162.6" font-size="9.7" text-anchor="middle" fill="#2a2a36">127.3</text>
<text x="806.38" y="162.6" font-size="9.7" text-anchor="middle" fill="#2a2a36">128.3</text>
<text x="935.03" y="162.6" font-size="9.7" text-anchor="middle" fill="#2a2a36">129.3</text>
<text x="1063.68" y="162.6" font-size="9.7" text-anchor="middle" fill="#2a2a36">130.3</text>
<text x="1192.33" y="162.6" font-size="9.7" text-anchor="middle" fill="#2a2a36">131.3</text>
<path d="M304.6 157.2 L316 157.2 L304.6 167.6 Z" fill="#585858" stroke="#0c0c0c" stroke-width="1.5" stroke-linejoin="miter"/>
<path d="M333.6 157.2 L345 157.2 L345 167.6 Z" fill="#585858" stroke="#0c0c0c" stroke-width="1.5" stroke-linejoin="miter"/>
<rect x="303.8" y="166.9" width="42" height="1.8" fill="#0c0c0c"/>
<path d="M224.8 157 L248.4 157 L236.5 168.6 Z" fill="#a987cf" stroke="#8a2bff" stroke-width="1.4"/>
</g>
</svg>
<div class="abs" id="vsepl"></div>

<!-- piano bottom -->
<div class="abs" id="pianobot"></div>
<div class="abs" style="left:4px;top:727px;width:149px;height:1.4px;background:#5e5a5e"></div>
<div class="abs" style="left:4px;top:736.6px;width:149px;height:1.4px;background:#5e5a5e"></div>

<!-- CC lane bars -->
<div class="abs" id="ccbars"></div>
<div class="abs" id="ccsep"></div>
<div class="abs" id="ccbot"></div>
<div class="abs" id="ccsel"></div>
<svg class="abs" style="left:154px;top:722px" width="1124" height="21" viewBox="154 722 1124 21"><g fill="#f4f4f4"><rect x="156.30" y="724.2" width="2.3" height="2.2"/><rect x="159.86" y="724.2" width="2.3" height="2.2"/><rect x="163.42" y="724.2" width="2.3" height="2.2"/><rect x="166.98" y="724.2" width="2.3" height="2.2"/><rect x="170.54" y="724.2" width="2.3" height="2.2"/><rect x="174.10" y="724.2" width="2.3" height="2.2"/><rect x="177.66" y="724.2" width="2.3" height="2.2"/><rect x="181.22" y="724.2" width="2.3" height="2.2"/><rect x="156.30" y="728.0" width="2.3" height="2.2"/><rect x="159.86" y="728.0" width="2.3" height="2.2"/><rect x="163.42" y="728.0" width="2.3" height="2.2"/><rect x="166.98" y="728.0" width="2.3" height="2.2"/><rect x="170.54" y="728.0" width="2.3" height="2.2"/><rect x="174.10" y="728.0" width="2.3" height="2.2"/><rect x="177.66" y="728.0" width="2.3" height="2.2"/><rect x="181.22" y="728.0" width="2.3" height="2.2"/><rect x="156.30" y="734.9" width="2.3" height="2.2"/><rect x="159.86" y="734.9" width="2.3" height="2.2"/><rect x="163.42" y="734.9" width="2.3" height="2.2"/><rect x="166.98" y="734.9" width="2.3" height="2.2"/><rect x="170.54" y="734.9" width="2.3" height="2.2"/><rect x="174.10" y="734.9" width="2.3" height="2.2"/><rect x="177.66" y="734.9" width="2.3" height="2.2"/><rect x="181.22" y="734.9" width="2.3" height="2.2"/><rect x="156.30" y="738.6" width="2.3" height="2.2"/><rect x="159.86" y="738.6" width="2.3" height="2.2"/><rect x="163.42" y="738.6" width="2.3" height="2.2"/><rect x="166.98" y="738.6" width="2.3" height="2.2"/><rect x="170.54" y="738.6" width="2.3" height="2.2"/><rect x="174.10" y="738.6" width="2.3" height="2.2"/><rect x="177.66" y="738.6" width="2.3" height="2.2"/><rect x="181.22" y="738.6" width="2.3" height="2.2"/><rect x="1247.90" y="724.2" width="2.3" height="2.2"/><rect x="1251.46" y="724.2" width="2.3" height="2.2"/><rect x="1255.02" y="724.2" width="2.3" height="2.2"/><rect x="1258.58" y="724.2" width="2.3" height="2.2"/><rect x="1262.14" y="724.2" width="2.3" height="2.2"/><rect x="1265.70" y="724.2" width="2.3" height="2.2"/><rect x="1269.26" y="724.2" width="2.3" height="2.2"/><rect x="1272.82" y="724.2" width="2.3" height="2.2"/><rect x="1247.90" y="728.0" width="2.3" height="2.2"/><rect x="1251.46" y="728.0" width="2.3" height="2.2"/><rect x="1255.02" y="728.0" width="2.3" height="2.2"/><rect x="1258.58" y="728.0" width="2.3" height="2.2"/><rect x="1262.14" y="728.0" width="2.3" height="2.2"/><rect x="1265.70" y="728.0" width="2.3" height="2.2"/><rect x="1269.26" y="728.0" width="2.3" height="2.2"/><rect x="1272.82" y="728.0" width="2.3" height="2.2"/><rect x="1247.90" y="734.9" width="2.3" height="2.2"/><rect x="1251.46" y="734.9" width="2.3" height="2.2"/><rect x="1255.02" y="734.9" width="2.3" height="2.2"/><rect x="1258.58" y="734.9" width="2.3" height="2.2"/><rect x="1262.14" y="734.9" width="2.3" height="2.2"/><rect x="1265.70" y="734.9" width="2.3" height="2.2"/><rect x="1269.26" y="734.9" width="2.3" height="2.2"/><rect x="1272.82" y="734.9" width="2.3" height="2.2"/><rect x="1247.90" y="738.6" width="2.3" height="2.2"/><rect x="1251.46" y="738.6" width="2.3" height="2.2"/><rect x="1255.02" y="738.6" width="2.3" height="2.2"/><rect x="1258.58" y="738.6" width="2.3" height="2.2"/><rect x="1262.14" y="738.6" width="2.3" height="2.2"/><rect x="1265.70" y="738.6" width="2.3" height="2.2"/><rect x="1269.26" y="738.6" width="2.3" height="2.2"/><rect x="1272.82" y="738.6" width="2.3" height="2.2"/></g></svg>
<div class="abs" style="left:235.75px;top:722px;width:1.5px;height:21px;background:#8a2bff"></div>
<div class="abs" style="left:1278px;top:722px;width:19px;height:21px;background:#b2b2b2"></div>

<!-- h scrollbar -->
<div class="abs chk" style="left:154px;top:743px;width:1124px;height:20px"></div>
<div class="btn3d" style="left:154px;top:743px;width:20px;height:20px"></div>
<svg class="abs" style="left:154px;top:743px" width="20" height="20"><path d="M12.2 4.6 L6 10 L12.2 15.4 Z" fill="#000"/></svg>
<div class="btn3d" style="left:199px;top:743px;width:6.4px;height:20px"></div>
<div class="btn3d" style="left:205.4px;top:743px;width:749.8px;height:20px"></div>
<div class="btn3d" style="left:955.2px;top:743px;width:6.8px;height:20px"></div>
<div class="btn3d" style="left:1214px;top:743px;width:19px;height:20px"></div>
<svg class="abs" style="left:1214px;top:743px" width="19" height="20"><path d="M7.4 4.6 L13.6 10 L7.4 15.4 Z" fill="#000"/></svg>
<div class="btn3d" style="left:1233px;top:743px;width:20px;height:20px"></div>
<svg class="abs" style="left:1233px;top:743px" width="20" height="20"><path d="M5 10 H15 M10 5 V15" stroke="#6a6a6a" stroke-width="1.3"/></svg>
<div class="abs" style="left:1253px;top:743px;width:4px;height:20px;background:#f0f0f0"></div>
<div class="abs" style="left:1254.4px;top:743px;width:1.2px;height:20px;background:#8a8a8a"></div>
<div class="btn3d" style="left:1257px;top:743px;width:21px;height:20px"></div>
<svg class="abs" style="left:1257px;top:743px" width="21" height="20"><path d="M5.4 10 H15.4" stroke="#6a6a6a" stroke-width="1.3"/></svg>

<!-- v scrollbar -->
<div class="abs" style="left:1278px;top:95px;width:20px;height:75px;background:#f0f0f0"></div>
<div class="abs chk" style="left:1278px;top:170px;width:19px;height:552px"></div>
<div class="abs" style="left:1297px;top:95px;width:2px;height:668px;background:#f0f0f0"></div>
<div class="btn3d" style="left:1278px;top:170px;width:19px;height:19px"></div>
<svg class="abs" style="left:1278px;top:170px" width="19" height="19"><path d="M4 11 L9.6 5.2 L15.2 11 Z" fill="#000"/></svg>
<div class="btn3d" style="left:1278px;top:366px;width:19px;height:140px"></div>
<div class="btn3d" style="left:1278px;top:658.6px;width:19px;height:18px"></div>
<svg class="abs" style="left:1278px;top:658px" width="19" height="19"><path d="M4.2 6.6 L9.6 12.8 L15 6.6 Z" fill="#000"/></svg>
<div class="abs" style="left:1278px;top:677px;width:19px;height:45px;background:#f0f0f0"></div>
<div class="btn3d" style="left:1278px;top:679px;width:19px;height:18px"></div>
<svg class="abs" style="left:1278px;top:679px" width="19" height="18"><path d="M4.6 9 H14.6 M9.6 4 V14" stroke="#6a6a6a" stroke-width="1.3"/></svg>
<div class="abs" style="left:1278px;top:699.6px;width:19px;height:1.2px;background:#8a8a8a"></div>
<div class="btn3d" style="left:1278px;top:703px;width:19px;height:19px"></div>
<svg class="abs" style="left:1278px;top:703px" width="19" height="19"><path d="M4.6 9.4 H14.6" stroke="#6a6a6a" stroke-width="1.3"/></svg>

<!-- bottom bar -->
<div class="abs" id="botbar"></div>
<svg class="abs" style="left:0;top:763px" width="180" height="26" viewBox="0 763 180 26">
 <defs><linearGradient id="tg" x1="0" y1="0" x2="0" y2="1"><stop offset="0" stop-color="#a6a6a6"/><stop offset="1" stop-color="#6c6c6c"/></linearGradient></defs>
 <g fill="url(#tg)" stroke="#6a6a6a" stroke-width=".8">
  <rect x="9.4" y="767" width="3" height="16.6"/>
  <path d="M24.4 768.8 V782.2 L13.2 775.4 Z"/>
  <path d="M38.2 767 V783.6 L53.2 775.3 Z"/>
  <rect x="68" y="767.6" width="3.6" height="16"/><rect x="75" y="767.6" width="3.8" height="16"/>
  <rect x="94" y="767.8" width="15.4" height="15.6" rx="1"/>
  <path d="M122.8 768.8 V782.2 L134 775.4 Z"/>
  <rect x="134.4" y="767" width="3" height="16.6"/>
  <path d="M148.1 771.2 L159.4 766.4 L158.8 776.4 L155.6 775.6 C154.6 777.6 156.6 780 159.4 780 C163 780 165.4 775.6 163.2 770.2 C168 774 166.8 782 160.6 784.2 C154 786 148.6 781 149.6 773.6 Z"/>
 </g>
</svg>

<div class="lbl" id="l1" style="left:186px">グリッド:</div>
<div class="dd dkb" style="left:230.5px;width:73px"><span class="t" id="d1" style="letter-spacing:2px;font-size:11px;top:.6px">1/32</span><svg width="10" height="7" viewBox="0 0 10 7"><path d="M.8 1 L5 5.4 L9.2 1" fill="none" stroke="#5a5a5a" stroke-width="1"/></svg></div>
<div class="dd" style="left:309px;width:68.5px"><span class="t" id="d2">通常</span><svg width="10" height="7" viewBox="0 0 10 7"><path d="M.8 1 L5 5.4 L9.2 1" fill="none" stroke="#5a5a5a" stroke-width="1"/></svg></div>
<div class="lbl" id="l2" style="left:390px">音符:</div>
<div class="dd dkb" style="left:444px;width:62.5px"><span class="t" id="d3">グリッド</span><svg width="10" height="7" viewBox="0 0 10 7"><path d="M.8 1 L5 5.4 L9.2 1" fill="none" stroke="#5a5a5a" stroke-width="1"/></svg></div>
<div class="abs" style="left:523.5px;top:769.3px;width:14px;height:14px;box-sizing:border-box;border:1px solid #5f5f5f;border-radius:3px;background:#f6f6f6"></div>
<div class="lbl" id="l3" style="left:543px">調スナップ</div>
<div class="lbl" id="l4" style="left:645.5px">色:</div>
<div class="dd" style="left:686px;width:96px"><span class="t" id="d4">ベロシティ</span><svg width="10" height="7" viewBox="0 0 10 7"><path d="M.8 1 L5 5.4 L9.2 1" fill="none" stroke="#5a5a5a" stroke-width="1"/></svg></div>
<div class="dd" style="left:1084.5px;width:103px"><span class="t" id="d5">トラック</span><span class="t" id="d7" style="letter-spacing:1.6px;font-size:11px;top:.8px">33</span><svg width="10" height="7" viewBox="0 0 10 7"><path d="M.8 1 L5 5.4 L9.2 1" fill="none" stroke="#5a5a5a" stroke-width="1"/></svg></div>
<div class="dd" style="left:1191.5px;width:103.5px"><span class="t" id="d6">全チャンネル</span><svg width="10" height="7" viewBox="0 0 10 7"><path d="M.8 1 L5 5.4 L9.2 1" fill="none" stroke="#5a5a5a" stroke-width="1"/></svg></div>

</div></div>
<div class="abs" id="edgeT"></div>
<div class="abs" id="edgeL0"></div>
<div class="abs" id="edgeL1"></div>
<div class="abs" id="edgeL2"></div>
<div class="abs" id="edgeR"></div>
<div class="abs" id="edgeB"></div>
</body>
</html>
